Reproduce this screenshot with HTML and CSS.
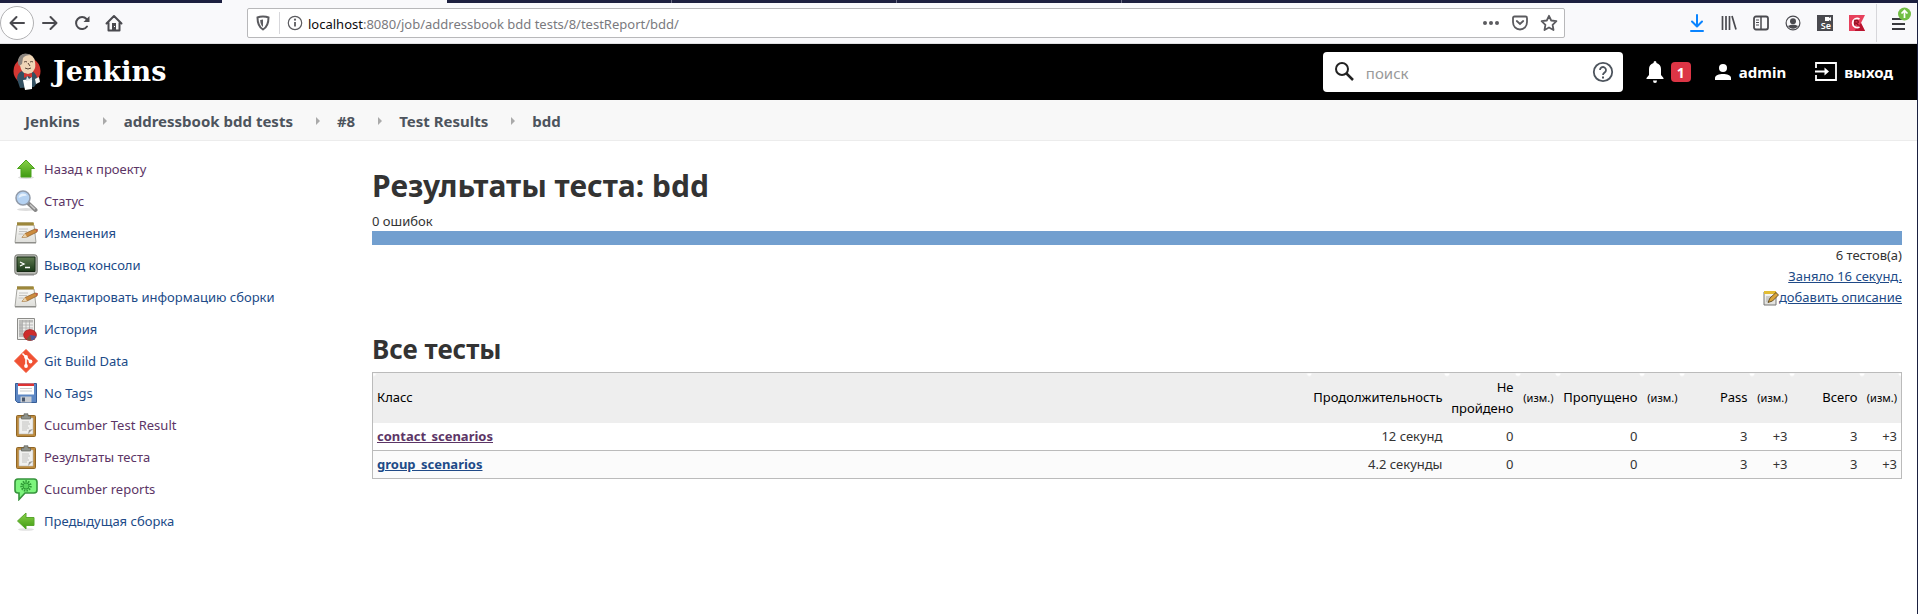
FILE: index.html
```html
<!DOCTYPE html>
<html lang="ru">
<head>
<meta charset="utf-8">
<title>Результаты теста: bdd [Jenkins]</title>
<link rel="stylesheet" href="styles.css">
</head>
<body>
<svg class="defs" aria-hidden="true">
  <defs>
    <linearGradient id="green" x1="0" y1="0" x2="0" y2="1"><stop offset="0" stop-color="#8ad24a"/><stop offset="1" stop-color="#3f9a12"/></linearGradient>
    <linearGradient id="paper" x1="0" y1="0" x2="0" y2="1"><stop offset="0" stop-color="#fafaf8"/><stop offset="1" stop-color="#dededa"/></linearGradient>
    <linearGradient id="screen" x1="0" y1="0" x2="0" y2="1"><stop offset="0" stop-color="#5f7a50"/><stop offset="1" stop-color="#1c3a1a"/></linearGradient>
    <symbol id="notepad" viewBox="0 0 24 24">
      <path d="M3 4h17l2 17.500H1z" fill="url(#paper)" stroke="#a5a5a0"/>
      <path d="M1 21h21v1.500H1z" fill="#8e8e8a"/>
      <path d="M3 1.500h17v3H3z" fill="#b59b45"/>
      <path d="M4 1v3m2-3v3m2-3v3m2-3v3m2-3v3m2-3v3m2-3v3m2-3v3" stroke="#796a2f" stroke-width=".8"/>
      <path d="M5 8h9M5 10.500h8M4.500 13h5" stroke="#c2c2c0"/>
      <path d="M8 16.500l3-4L21 8l2.500.5-.5 2.500-10 5z" fill="#cc8c3f" stroke="#8b5a22" stroke-width=".7"/>
      <path d="M8 16.500l3-4 2 3.500z" fill="#ead3ab"/><path d="M21 8l2.500.5-.5 2.500z" fill="#c9534b"/>
    </symbol>
    <symbol id="clipboard" viewBox="0 0 24 24">
      <rect x="2.500" y="2.500" width="19" height="21" rx="1" fill="#bd8a3c" stroke="#8e6526"/>
      <path d="M5 5h14v16H5z" fill="#f1f1ef" stroke="#b9b9b5" stroke-width=".6"/>
      <path d="M8 9h7M8 11h8M8 13h6M8 15h7M8 17h5" stroke="#c2c2c0"/>
      <path d="M14 21l1-4 4-1z" fill="#9a9a97"/>
      <path d="M7.500 6V3H10V.8h4V3h2.500v3z" fill="#8f938b" stroke="#5f625c" stroke-width=".7"/>
    </symbol>
  </defs>
</svg>

<div class="tabstrip"><span class="tab tab-first"></span><span class="tab tab-active"></span><span class="tab"></span><span class="tab"></span><span class="tab"></span></div>

<div class="toolbar">
  <div class="nav-buttons">
    <button class="icon-button back" aria-label="Назад"><svg width="20" height="20" viewBox="0 0 20 20"><path d="M17 10H4M9.500 4L3.500 10l6 6" class="line"/></svg></button>
    <button class="icon-button" aria-label="Вперёд"><svg width="20" height="20" viewBox="0 0 20 20"><path d="M3 10h13M10.500 4l6 6-6 6" class="line"/></svg></button>
    <button class="icon-button" aria-label="Обновить"><svg width="20" height="20" viewBox="0 0 20 20"><path d="M15 13.500A6 6 0 1 1 14.500 6" class="line"/><path d="M17.500 3v6h-6z" fill="#4a4a4f"/></svg></button>
    <button class="icon-button" aria-label="Домой"><svg width="20" height="20" viewBox="0 0 20 20"><path d="M2.500 10.500L10 3l7.500 7.500M4.500 10v7.500h11V10" class="line"/><path d="M8 10h4v7H8z" fill="#4a4a4f"/><path d="M10 13h1v1h-1z" fill="#fff"/></svg></button>
  </div>
  <div class="urlbar">
    <svg width="16" height="16" viewBox="0 0 16 16"><path d="M8 1.500c2 0 4 .3 5.500 1 0 6-1 9.500-5.500 12-4.500-2.500-5.500-6-5.500-12C4 1.800 6 1.500 8 1.500z" fill="none" stroke="#5b5b5f" stroke-width="2"/><path d="M8 4.500v7.500c-2-1.500-2.700-4-2.800-7z" fill="#5b5b5f"/></svg>
    <span class="url-divider"></span>
    <svg width="16" height="16" viewBox="0 0 16 16"><circle cx="8" cy="8" r="6.700" fill="none" stroke="#5b5b5f" stroke-width="1.200"/><path d="M8 7v4.500" stroke="#5b5b5f" stroke-width="1.800"/><circle cx="8" cy="4.700" r="1.100" fill="#5b5b5f"/></svg>
    <div class="url" role="textbox" aria-label="Адрес"><span class="host">localhost</span>:8080/job/addressbook bdd tests/8/testReport/bdd/</div>
    <svg width="18" height="16" viewBox="0 0 18 16"><g fill="#5b5b5f"><circle cx="3" cy="8" r="2"/><circle cx="9" cy="8" r="2"/><circle cx="15" cy="8" r="2"/></g></svg>
    <svg width="16" height="16" viewBox="0 0 16 16"><path d="M2.500 1.500h11q1.500 0 1.500 1.500v4c0 4.500-3 7.500-7 7.500S1 11.500 1 7V3q0-1.500 1.500-1.500zM4.800 6L8 9l3.200-3" fill="none" stroke="#5b5b5f" stroke-width="1.800" stroke-linecap="round"/></svg>
    <svg width="18" height="18" viewBox="0 0 18 18"><path d="M9 1.800l2.200 4.700 5.200.7-3.800 3.600.9 5.200L9 13.500 4.500 16l.9-5.200-3.800-3.600 5.200-.7z" fill="none" stroke="#5b5b5f" stroke-width="1.800" stroke-linejoin="round"/></svg>
  </div>
  <div class="extensions">
    <svg width="16" height="18" viewBox="0 0 16 18"><path d="M8 1v11M3 7.500l5 5 5-5M2 17h12" fill="none" stroke="#0a84ff" stroke-width="2" stroke-linecap="round" stroke-linejoin="round"/></svg>
    <svg width="16" height="16" viewBox="0 0 16 16"><path d="M1.500 1v14M5 1v14M8.500 1v14M11 1l4 13.500" stroke="#4a4a4f" stroke-width="1.700" fill="none"/></svg>
    <svg width="16" height="16" viewBox="0 0 16 16"><rect x="1" y="1.500" width="14" height="13" rx="2" fill="none" stroke="#4a4a4f" stroke-width="1.800"/><path d="M8 2v12" stroke="#4a4a4f" stroke-width="1.500"/><path d="M3 5h3M3 7.500h3M3 10h3" stroke="#4a4a4f"/></svg>
    <svg width="16" height="16" viewBox="0 0 16 16"><circle cx="8" cy="8" r="6.900" fill="none" stroke="#4a4a4f" stroke-width="1.200"/><circle cx="8" cy="6.300" r="3" fill="#4a4a4f"/><path d="M3 11c1.500-1 3-1.300 5-1.300s3.500.3 5 1.300c-1 1.700-3 2.700-5 2.700S4 12.700 3 11z" fill="#4a4a4f"/></svg>
    <span class="selenium"><svg width="6" height="4" viewBox="0 0 6 4"><path d="M0 0h4v1l2-1v4L4 3v1H0z" fill="#fff"/></svg><span>Se</span></span>
    <svg width="16" height="16" viewBox="0 0 16 16"><path d="M0 0h16l-4 8 4 8H0z" fill="#e7405c"/><path d="M6 15l6-7 4 8H6z" fill="#b9142f"/><path d="M10.500 4A4.600 4.600 0 1 0 10.500 12" fill="none" stroke="#fff" stroke-width="1.800"/><path d="M5.800 10.500v-5h2q1.500.1 1.500 1.400T7.800 8.200H6m1.500 0l2 2.300" fill="none" stroke="#8f1020" stroke-width="1.300"/></svg>
  </div>
  <button class="app-menu" aria-label="Меню"><svg width="26" height="28" viewBox="0 0 26 28"><path d="M5 12h13M5 17h13M5 22h13" stroke="#3a3a3f" stroke-width="2"/><circle cx="17.500" cy="7" r="6.500" fill="#72bf44"/><path d="M17.500 11V4M14.500 6.500l3-3 3 3" fill="none" stroke="#fff" stroke-width="1.700"/></svg></button>
</div>

<header class="header">
  <a class="brand" href="#">
    <svg width="30" height="40" viewBox="0 0 30 40"><circle cx="15" cy="19" r="13.500" fill="#d33833"/>
      <path d="M5 27q0-6 5-8l5 3 5-3q6 3 5 12l-3 4-14 1z" fill="#335061"/>
      <path d="M7 10Q6 2 14 2t9 8q1 5-1 8-2 4-6 4-5 0-7-5z" fill="#f0d6b7"/>
      <path d="M7 14Q4 7 9 3q4-3 10 0-6 0-8 3l-1 6z" fill="#8b8580"/>
      <path d="M12 10q2-1 3 0m3 0q2-1 3 0m-5 1l2 3m-5 2q3 2 6 0" fill="none" stroke="#5b4438"/>
      <path d="M12 21l4 1 4-1v5l-4-2-4 2z" fill="#d33833"/>
      <path d="M11 28l9-1v10l-7 1z" fill="#fff"/><path d="M23 27l4-2 1 5-4 2z" fill="#f2f2f2"/><path d="M15 24l2 3 3-2v3l-6 1z" fill="#dfe5e8"/></svg>
    <span>Jenkins</span>
  </a>
  <label class="search">
    <svg width="22" height="22" viewBox="0 0 22 22"><circle cx="8" cy="8" r="6" fill="none" stroke="#222" stroke-width="2"/><path d="M12.500 12.500L19 19" stroke="#222" stroke-width="2.500"/></svg>
    <input type="text" placeholder="поиск" aria-label="поиск">
    <svg width="22" height="22" viewBox="0 0 22 22"><circle cx="11" cy="11" r="9.200" fill="none" stroke="#4d545d" stroke-width="1.800"/><path d="M8 9a3 3 0 1 1 4.500 2.600Q11 12.500 11 14" fill="none" stroke="#4d545d" stroke-width="1.800"/><path d="M10 15.500h2v2h-2z" fill="#4d545d"/></svg>
  </label>
  <button class="alerts" aria-label="Уведомления"><svg width="18" height="22" viewBox="0 0 18 22"><path d="M9 0q1.500 0 1.500 2Q15 3.500 15 8v6l2.500 3v1H.5v-1L3 14V8q0-4.500 4.500-6Q7.500 0 9 0zM7 19.500h4Q11 22 9 22t-2-2.500z" fill="#fff"/></svg><span class="badge">1</span></button>
  <a class="header-link user" href="#"><svg width="16" height="16" viewBox="0 0 16 16"><circle cx="8" cy="4" r="4" fill="#fff"/><path d="M0 16v-2c0-2.700 4-4 8-4s8 1.300 8 4v2z" fill="#fff"/></svg>admin</a>
  <a class="header-link logout" href="#"><svg width="22" height="20" viewBox="0 0 22 20"><path d="M1 6V1h20v17H1v-5" fill="none" stroke="#fff" stroke-width="1.800"/><path d="M0 9.500h11" stroke="#fff" stroke-width="2"/><path d="M9.500 5.500l4.500 4-4.500 4z" fill="#fff"/></svg>выход</a>
</header>

<nav class="crumbs">
  <a href="#">Jenkins</a><i></i><a href="#">addressbook bdd tests</a><i></i><a href="#">#8</a><i></i><a href="#">Test Results</a><i></i><a href="#">bdd</a>
</nav>

<div class="page">
  <nav class="tasks">
    <a class="visited" href="#"><svg width="24" height="24" viewBox="0 0 24 24"><ellipse cx="12" cy="20.500" rx="8" ry="1.500" fill="#ddd"/><path d="M12 3l8.500 8.500H17V20H7v-8.500H3.500z" fill="url(#green)" stroke="#4ba31c"/></svg>Назад к проекту</a>
    <a class="visited" href="#"><svg width="24" height="24" viewBox="0 0 24 24"><ellipse cx="12" cy="20.500" rx="9" ry="1.500" fill="#ddd"/><path d="M14.500 14.500l7 6.500" stroke="#888" stroke-width="4" stroke-linecap="round"/><path d="M16 15.500l5 4.700" stroke="#c8c8c8" stroke-width="1.500"/><circle cx="9" cy="9" r="7" fill="#b5d2f2" stroke="#909aa8" stroke-width="1.500"/><path d="M4.500 9Q5 4.500 9 4.500q3 0 4 2-5 0-8.500 2.500z" fill="#e6f1fc"/></svg>Статус</a>
    <a href="#"><svg width="24" height="24"><use href="#notepad"/></svg>Изменения</a>
    <a href="#"><svg width="24" height="24" viewBox="0 0 24 24"><rect x=".8" y="1.800" width="22.400" height="19.500" rx="2.500" fill="#b9bbb5" stroke="#777972"/><path d="M3 4h18v14.500H3z" fill="url(#screen)" stroke="#172a15"/><path d="M6 9l4 2-4 2M11 14.500h5" fill="none" stroke="#fff" stroke-width="1.300"/><path d="M4 22h16" stroke="#888"/></svg>Вывод консоли</a>
    <a href="#"><svg width="24" height="24"><use href="#notepad"/></svg>Редактировать информацию сборки</a>
    <a href="#"><svg width="24" height="24" viewBox="0 0 24 24"><path d="M3.500 1.500h17v21h-17z" fill="#ededeb" stroke="#8c8c89"/><path d="M5 3h3v17H5zM5 3h14v2.500H5z" fill="#bdbdbb"/><path d="M5 8h14M5 11h14M5 14h14M5 17h14M8.500 3v17M12 3v17M15.500 3v17" stroke="#aaa" stroke-width=".8"/><ellipse cx="16" cy="18" rx="6.500" ry="5.500" fill="#ce2c2c" stroke="#8f1818" stroke-width=".6"/><path d="M16 18l6 1q-1 4-5 4.500z" fill="#4c5a9d"/><path d="M16 18l1 5.500q-3 .2-4.500-1.500z" fill="#80543d"/></svg>История</a>
    <a href="#"><svg width="24" height="24" viewBox="0 0 24 24"><path d="M12 .5L23.500 12 12 23.500.5 12z" fill="#f05133" stroke="#f05133" stroke-linejoin="round"/><path d="M8.500 4.500L12 8v9M12 8l4.500 4.500" fill="none" stroke="#fff" stroke-width="1.600"/><g fill="#fff"><circle cx="12" cy="8" r="1.900"/><circle cx="12" cy="17" r="1.900"/><circle cx="16.500" cy="12.500" r="1.900"/></g></svg>Git Build Data</a>
    <a href="#"><svg width="24" height="24" viewBox="0 0 24 24"><path d="M1.500 2.500h21v19h-19l-2-2z" fill="#5d87c4" stroke="#355c96"/><path d="M4 2.500h16v11H4z" fill="#fff"/><path d="M4 2.500h16V5H4z" fill="#d33"/><path d="M6 7.500h12M6 10h12" stroke="#ccc"/><path d="M6.500 15.500h11v6h-11z" fill="#c9ccd1"/><path d="M8 16.500h3v4H8z" fill="#48566b"/></svg>No Tags</a>
    <a class="visited" href="#"><svg width="24" height="24"><use href="#clipboard"/></svg>Cucumber Test Result</a>
    <a class="visited" href="#"><svg width="24" height="24"><use href="#clipboard"/></svg>Результаты теста</a>
    <a class="visited" href="#"><svg width="24" height="24" viewBox="0 0 24 24"><path d="M4 2h16q3 0 3 3v8q0 3-3 3h-9l-6 6.500V16H4q-3 0-3-3V5q0-3 3-3z" fill="#7df57d" stroke="#36933c" stroke-width="1.600"/><circle cx="12" cy="9" r="4.500" fill="none" stroke="#2f9c36" stroke-width="2.500" stroke-dasharray="1.500 1"/><circle cx="12" cy="9" r="3" fill="#5ad55c" stroke="#2f9c36"/></svg>Cucumber reports</a>
    <a href="#"><svg width="24" height="24" viewBox="0 0 24 24"><ellipse cx="12" cy="20.500" rx="8" ry="1.300" fill="#e2e2e2"/><path d="M3.500 12L12 4v4.500h8v8h-8V20z" fill="url(#green)" stroke="#58a62c"/></svg>Предыдущая сборка</a>
  </nav>

  <main class="content">
    <h1>Результаты теста: bdd</h1>
    <div class="failures">0 ошибок</div>
    <div class="bar"></div>
    <div class="summary">
      <span>6 тестов(а)</span>
      <a href="#">Заняло 16 секунд.</a>
      <span class="describe"><svg width="16" height="16" viewBox="0 0 16 16"><path d="M1 2h12v13H1z" fill="url(#paper)" stroke="#777"/><path d="M1 1h12v3H1z" fill="#e2bd35"/><path d="M3 7h6M3 9h5M3 11h4" stroke="#aaa"/><path d="M5 12.500L7 8l6-5.500L15.500 5l-6 6z" fill="#d9a53a" stroke="#4f3b14" stroke-width=".8"/></svg><a href="#">добавить описание</a></span>
    </div>
    <h2>Все тесты</h2>
    <table class="results">
      <colgroup><col><col class="c-duration"><col class="c-fail"><col class="c-diff"><col class="c-skip"><col class="c-diff"><col class="c-total"><col class="c-diff"><col class="c-total"><col class="c-diff"></colgroup>
      <thead><tr><th>Класс</th><th>Продолжительность</th><th>Не пройдено</th><th class="diff">(изм.)</th><th>Пропущено</th><th class="diff">(изм.)</th><th>Pass</th><th class="diff">(изм.)</th><th>Всего</th><th class="diff">(изм.)</th></tr></thead>
      <tbody>
        <tr><td><a class="visited" href="#">contact_scenarios</a></td><td>12 секунд</td><td>0</td><td></td><td>0</td><td></td><td>3</td><td>+3</td><td>3</td><td>+3</td></tr>
        <tr><td><a href="#">group_scenarios</a></td><td>4.2 секунды</td><td>0</td><td></td><td>0</td><td></td><td>3</td><td>+3</td><td>3</td><td>+3</td></tr>
      </tbody>
    </table>
  </main>
</div>
</body>
</html>
```
FILE: styles.css
```css
* { box-sizing: border-box; }
body {
  margin: 0;
  min-height: 100vh;
  border-right: 1px solid #1b2140;
  background: #fff;
  color: #333;
  font: 13px/21px "Noto Sans", "Open Sans", sans-serif;
}
svg { flex: none; display: block; }
button { padding: 0; border: 0; background: none; font: inherit; color: inherit; }
a { color: #204a87; }
a.visited { color: #5c3566; }
.defs { position: absolute; width: 0; height: 0; }

.tabstrip { display: flex; height: 3px; background: #1d2040; }
.tab { width: 225px; border-right: 1px solid #6a6c84; }
.tab-first { width: 222px; border-right: 0; }
.tab-active { background: #f9f9fb; border-right: 0; }

.toolbar {
  display: flex;
  align-items: center;
  height: 41px;
  background: #f9f9fb;
  border-bottom: 1px solid #e0e0e2;
}
.nav-buttons { display: flex; width: 247px; }
.icon-button { display: grid; place-items: center; width: 32px; height: 34px; }
.icon-button.back { width: 34px; border: 1px solid #b1b1b3; border-radius: 50%; background: #fff; }
.line { fill: none; stroke: #4a4a4f; stroke-width: 2; stroke-linecap: round; stroke-linejoin: round; }
.urlbar {
  flex: 1;
  display: flex;
  align-items: center;
  gap: 12px;
  height: 30px;
  padding: 0 6px 0 7px;
  border: 1px solid #b8b8ba;
  border-radius: 2px;
  background: #fff;
}
.url-divider { width: 1px; height: 22px; margin: 0 -5px 0 -4px; background: #d7d7db; }
.url { flex: 1; margin: 2px 0 0 -7px; font-size: 13px; color: #7a7a7e; white-space: nowrap; }
.host { color: #0c0c0d; }
.extensions { display: flex; align-items: center; gap: 16px; margin-left: 124px; }
.selenium {
  display: flex; flex-direction: column; align-items: flex-end; gap: 1px;
  width: 16px; height: 16px; padding: 2px 2px 0 0;
  background: #4a4a4f; color: #fff; font-size: 9px; line-height: 8px; font-weight: 600;
}
.app-menu { margin-left: 11px; padding: 0 4px 4px 10px; border-left: 1px solid #d7d7db; height: 38px; }

.header {
  display: flex;
  align-items: center;
  height: 56px;
  padding: 0 24px 0 12px;
  background: #000;
  color: #fff;
}
.brand {
  display: flex; align-items: center; gap: 11px; flex: 1;
  color: #fff; font: bold 27px/40px "DejaVu Serif", serif; text-decoration: none;
}
.search {
  display: flex; align-items: center;
  width: 300px; height: 40px; padding: 0 9px 0 11px;
  border-radius: 4px; background: #fff;
}
.search input { flex: 1; min-width: 0; padding: 2px 0 0 10px; border: 0; outline: 0; font: 15px/20px "Noto Sans", sans-serif; }
.search input::placeholder { color: #999; }
.alerts { display: flex; align-items: center; gap: 7px; margin-left: 23px; }
.badge { width: 20px; height: 20px; border-radius: 4px; background: #dc3545; font-weight: 700; font-size: 14px; line-height: 21px; }
.header-link { display: flex; align-items: center; gap: 8px; color: #fff; font-size: 15px; font-weight: 700; text-decoration: none; }
.user { margin-left: 24px; }
.logout { margin-left: 29px; gap: 7px; }

.crumbs {
  display: flex; align-items: center; gap: 20px;
  height: 41px; padding: 2px 25px 0;
  background: #f8f8f8; border-bottom: 1px solid #ececec;
}
.crumbs a { color: #4d545d; font-size: 15px; font-weight: 700; text-decoration: none; }
.crumbs i { margin: 0 -3px 0 3px; border: 4px solid transparent; border-left-color: #aaa; border-right: 0; }

.page { display: flex; padding: 12px 15px 0 14px; }
.tasks { display: flex; flex-direction: column; width: 358px; }
.tasks a { display: flex; align-items: center; gap: 6px; height: 32px; text-decoration: none; }
.content { flex: 1; min-width: 0; padding-top: 8px; }
h1, h2 { margin: 0; font-weight: 700; }
h1 { font-size: 30px; line-height: 50px; }
h2 { margin-top: 19px; font-size: 26px; line-height: 45px; }
.failures { line-height: 20px; }
.bar { height: 14px; background: #729fcf; }
.summary { display: flex; flex-direction: column; align-items: flex-end; }
.describe { display: flex; align-items: center; }

.results { width: 100%; table-layout: fixed; border-collapse: collapse; border: 1px solid #bbb; }
.results th {
  height: 50px; padding: 3px 4px; color: #000; font-weight: 400; text-align: right;
  background:
    radial-gradient(circle at 0 0, #fff 2px, transparent 3px),
    radial-gradient(circle at 100% 0, #fff 2px, transparent 3px),
    #eee;
}
.results td { height: 28px; padding: 3px 4px; text-align: right; border-bottom: 1px solid #bbb; }
.results tr > :first-child { text-align: left; }
.results td a { font-weight: 700; }
.results tbody tr:nth-child(even) { background: #fbfbfb; }
.results .diff { font-size: 11px; }
.c-duration { width: 138px; }
.c-fail { width: 71px; }
.c-diff { width: 40px; }
.c-skip { width: 84px; }
.c-total { width: 70px; }
```
